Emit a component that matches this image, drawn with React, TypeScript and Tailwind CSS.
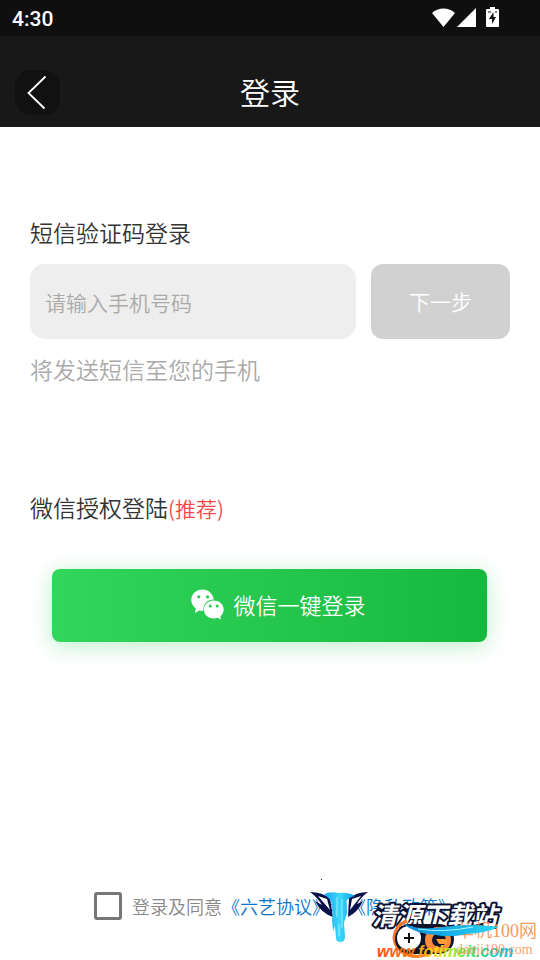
import React, { useState } from "react";

function StatusBar() {
  return (
    <div className="flex h-9 items-center justify-between bg-[#0f0f0f] pl-3 pr-[41px] text-white">
      <span className="pt-0.5 font-[Roboto,sans-serif] text-[21px] font-medium leading-6">4:30</span>
      <div className="flex items-center pb-0.5">
        <svg className="mr-0.5 h-[19px] w-[23px]" viewBox="0 0 23 19" fill="currentColor" aria-hidden="true">
          <path d="M0 5C6-1 17-1 23 5L11.500 19Z" />
        </svg>
        <svg className="mr-[10px] h-[19px] w-[19px]" viewBox="0 0 19 19" fill="currentColor" aria-hidden="true">
          <path d="M19 0V19H0Z" />
        </svg>
        <svg className="h-5 w-[13px]" viewBox="0 0 13 20" aria-hidden="true">
          <path d="M4 0H9V2H12Q13 2 13 3V19Q13 20 12 20H1Q0 20 0 19V3Q0 2 1 2H4Z" fill="currentColor" />
          <path d="M7.500 5L3 12H6V17L10 10H7.500Z" fill="#0f0f0f" />
          <path d="M2 5H5M9 5H11" stroke="#0f0f0f" />
        </svg>
      </div>
    </div>
  );
}

function Header() {
  return (
    <header className="grid h-[91px] grid-cols-[1fr_auto_1fr] items-center bg-[#181818] px-[15px] pt-[21px] text-white">
      <button type="button" aria-label="返回" className="flex h-[45px] w-[45px] items-center rounded-2xl bg-[#111] pl-3">
        <svg className="h-[35px] w-5" viewBox="0 0 20 35" fill="none" stroke="currentColor" strokeWidth="1.800" aria-hidden="true">
          <path d="M18.500 1.500L1.500 18L17.500 33.500" />
        </svg>
      </button>
      <h1 className="pb-0.5 text-[30px] leading-[45px]">登录</h1>
    </header>
  );
}

function WechatIcon() {
  return (
    <svg className="h-[31px] w-[33px]" viewBox="0 0 33 31" aria-hidden="true">
      <path
        d="M11.500 0.500C5.200 0.500 0.300 5 0.300 11C0.300 14.500 2 17.500 4.800 19.500L4 24L8.300 21.500C9.400 21.800 11 22 12.500 21.800C12 14.500 16.500 10.400 22.800 10.500C21.800 4.500 17.300 0.500 11.500 0.500Z"
        fill="#fff"
      />
      <path
        d="M22.800 11.500C17 11.500 13 15.500 13 20.500C13 25.800 17.300 29.500 22.700 29.500C24.200 29.500 25.400 29.200 26.600 28.700L30 30.500L29.300 27.300C31.400 25.600 32.700 23.300 32.700 20.500C32.700 15.500 28.500 11.500 22.800 11.500Z"
        fill="#fff"
      />
      <g fill="#28cb53">
        <circle cx="7.800" cy="7.800" r="1.600" />
        <circle cx="16.500" cy="7.800" r="1.600" />
        <circle cx="19.200" cy="17" r="1.500" />
        <circle cx="26.200" cy="17" r="1.500" />
      </g>
    </svg>
  );
}

function SiteMarks() {
  return (
    <svg className="pointer-events-none absolute bottom-0 right-0 h-[90px] w-[240px]" viewBox="0 0 240 90">
      <defs>
        <linearGradient id="rainbow" x1="0" x2="1">
          <stop offset="0" stopColor="#ff4a12" />
          <stop offset="0.250" stopColor="#ff7a10" />
          <stop offset="0.420" stopColor="#ffd814" />
          <stop offset="0.580" stopColor="#8bf02c" />
          <stop offset="0.750" stopColor="#22dc88" />
          <stop offset="1" stopColor="#18b4e8" />
        </linearGradient>
        <linearGradient id="drip" x1="0" x2="1">
          <stop offset="0" stopColor="#0fa5f0" />
          <stop offset="0.500" stopColor="#3fd8fb" />
          <stop offset="1" stopColor="#0b9ff0" />
        </linearGradient>
        <linearGradient id="swoosh" x1="0" x2="1">
          <stop offset="0" stopColor="#0887dc" />
          <stop offset="1" stopColor="#28d8f5" />
        </linearGradient>
      </defs>
      <rect x="21" y="9" width="1" height="1" fill="#222" />
      <path d="M10 22Q21 22 30 28L33 47Q21 43 15 31L22 35Q17 27 10 22Z" fill="#08104a" />
      <path d="M68 22Q57 22 49 28L48 47Q58 42 63 31L57 34Q61 27 68 22Z" fill="#08104a" />
      <path d="M18 26L27 29L30 40Z" fill="#fff" />
      <path d="M61 26L52 29L50 40Z" fill="#fff" />
      <path
        d="M24 24Q31 21 39 23Q48 22 55 26Q49 27 46 31L47 43L44 53L45 67Q45 72 40 72Q36 72 36 68L35 56L33 61L32 50L33 42L31 31Q28 27 24 24Z"
        fill="url(#drip)"
      />
      <path d="M37 27V47M42 29V58M39 54V66" stroke="#9af2ff" strokeWidth="1" />
      <text
        x="72"
        y="55"
        fontSize="25"
        fontStyle="italic"
        fontWeight="700"
        fontFamily="'Noto Sans CJK SC', sans-serif"
        fill="#fff"
        stroke="#0c1233"
        strokeWidth="4"
        strokeLinejoin="round"
        paintOrder="stroke"
      >
        清源下载站
      </text>
      <path d="M107 51Q95 55 94 68Q95 80 108 85Q120 89 132 82" fill="none" stroke="#ff772c" strokeWidth="3" />
      <rect x="95" y="54" width="59" height="30" rx="15" fill="#10142a" />
      <circle cx="109" cy="68" r="12" fill="#fff" />
      <circle cx="138" cy="70" r="13" fill="#ff8a3a" />
      <circle cx="139" cy="70" r="7" fill="#10142a" />
      <path d="M136 69H147V74H139Z" fill="#ff9d35" />
      <path d="M109 63V73M104 68H114" stroke="#111" strokeWidth="2" />
      <text x="156" y="67" fontSize="18" fontFamily="'Liberation Serif', 'Noto Sans CJK SC', serif" fill="#f58e4a" opacity="0.9">
        单机100网
      </text>
      <path d="M102 53Q118 61 143 57Q170 53 199 57Q186 63 166 64Q150 68 136 65Q115 64 102 53Z" fill="url(#swoosh)" />
      <path d="M118 59Q143 63 173 57" fill="none" stroke="#a4faff" strokeWidth="1" />
      <text
        x="77"
        y="87"
        fontSize="16"
        fontWeight="bold"
        fontStyle="italic"
        fontFamily="'Liberation Sans', sans-serif"
        fill="url(#rainbow)"
      >
        www.fotimeit.com
      </text>
      <text x="156" y="84" fontSize="14" fontFamily="'Liberation Serif', serif" fill="#f58e4a" opacity="0.8">
        danji100.com
      </text>
    </svg>
  );
}

export default function App() {
  const [phone, setPhone] = useState("");
  return (
    <div className="flex min-h-screen flex-col bg-white font-['Noto_Sans_CJK_SC',sans-serif] font-[350] text-[#333]">
      <StatusBar />
      <Header />
      <main className="flex flex-1 flex-col px-[30px] pt-[88px]">
        <form onSubmit={(event) => event.preventDefault()}>
          <label htmlFor="phone" className="block text-[23px] leading-[34px]">
            短信验证码登录
          </label>
          <div className="mt-[15px] flex gap-[15px]">
            <input
              id="phone"
              type="tel"
              value={phone}
              onChange={(event) => setPhone(event.target.value)}
              placeholder="请输入手机号码"
              className="h-[75px] min-w-0 flex-1 rounded-[15px] bg-[#eee] px-[15px] text-[21px] outline-none placeholder:text-[#aaa]"
            />
            <button type="submit" className="h-[75px] w-[139px] rounded-xl bg-[#d1d1d1] text-[21px] text-white">
              下一步
            </button>
          </div>
          <p className="mt-[13px] text-[23px] leading-[34px] text-[#aaa]">将发送短信至您的手机</p>
        </form>
        <section className="mt-[104px]">
          <h2 className="text-[23px] leading-[34px]">
            微信授权登陆<span className="text-[21px] text-[#f04848]">(推荐)</span>
          </h2>
          <div className="mt-11 pl-[22px] pr-[23px]">
            <button
              type="button"
              className="flex h-[73px] w-full items-center justify-center gap-[9px] rounded-lg bg-linear-to-r from-[#31d65b] to-[#16b83e] pb-0.5 pl-[18px] text-[22px] text-white shadow-[0_4px_22px_rgba(35,200,80,0.3)]"
            >
              <WechatIcon />
              微信一键登录
            </button>
          </div>
        </section>
      </main>
      <footer className="relative flex h-[90px] items-start justify-center pl-[10px] pt-[21px] text-[18px] leading-[30px]">
        <input
          id="agree"
          type="checkbox"
          className="mr-[10px] mt-px h-7 w-7 appearance-none rounded-[3px] border-[3px] border-[#777] bg-white checked:bg-[#777]"
        />
        <label htmlFor="agree" className="text-[#888]">
          登录及同意
        </label>
        <a href="#terms" className="text-[#0875ca]">《六艺协议》</a>
        <span className="text-[#0875ca]">和</span>
        <a href="#privacy" className="text-[#0875ca]">《隐私政策》</a>
        <SiteMarks />
      </footer>
    </div>
  );
}
